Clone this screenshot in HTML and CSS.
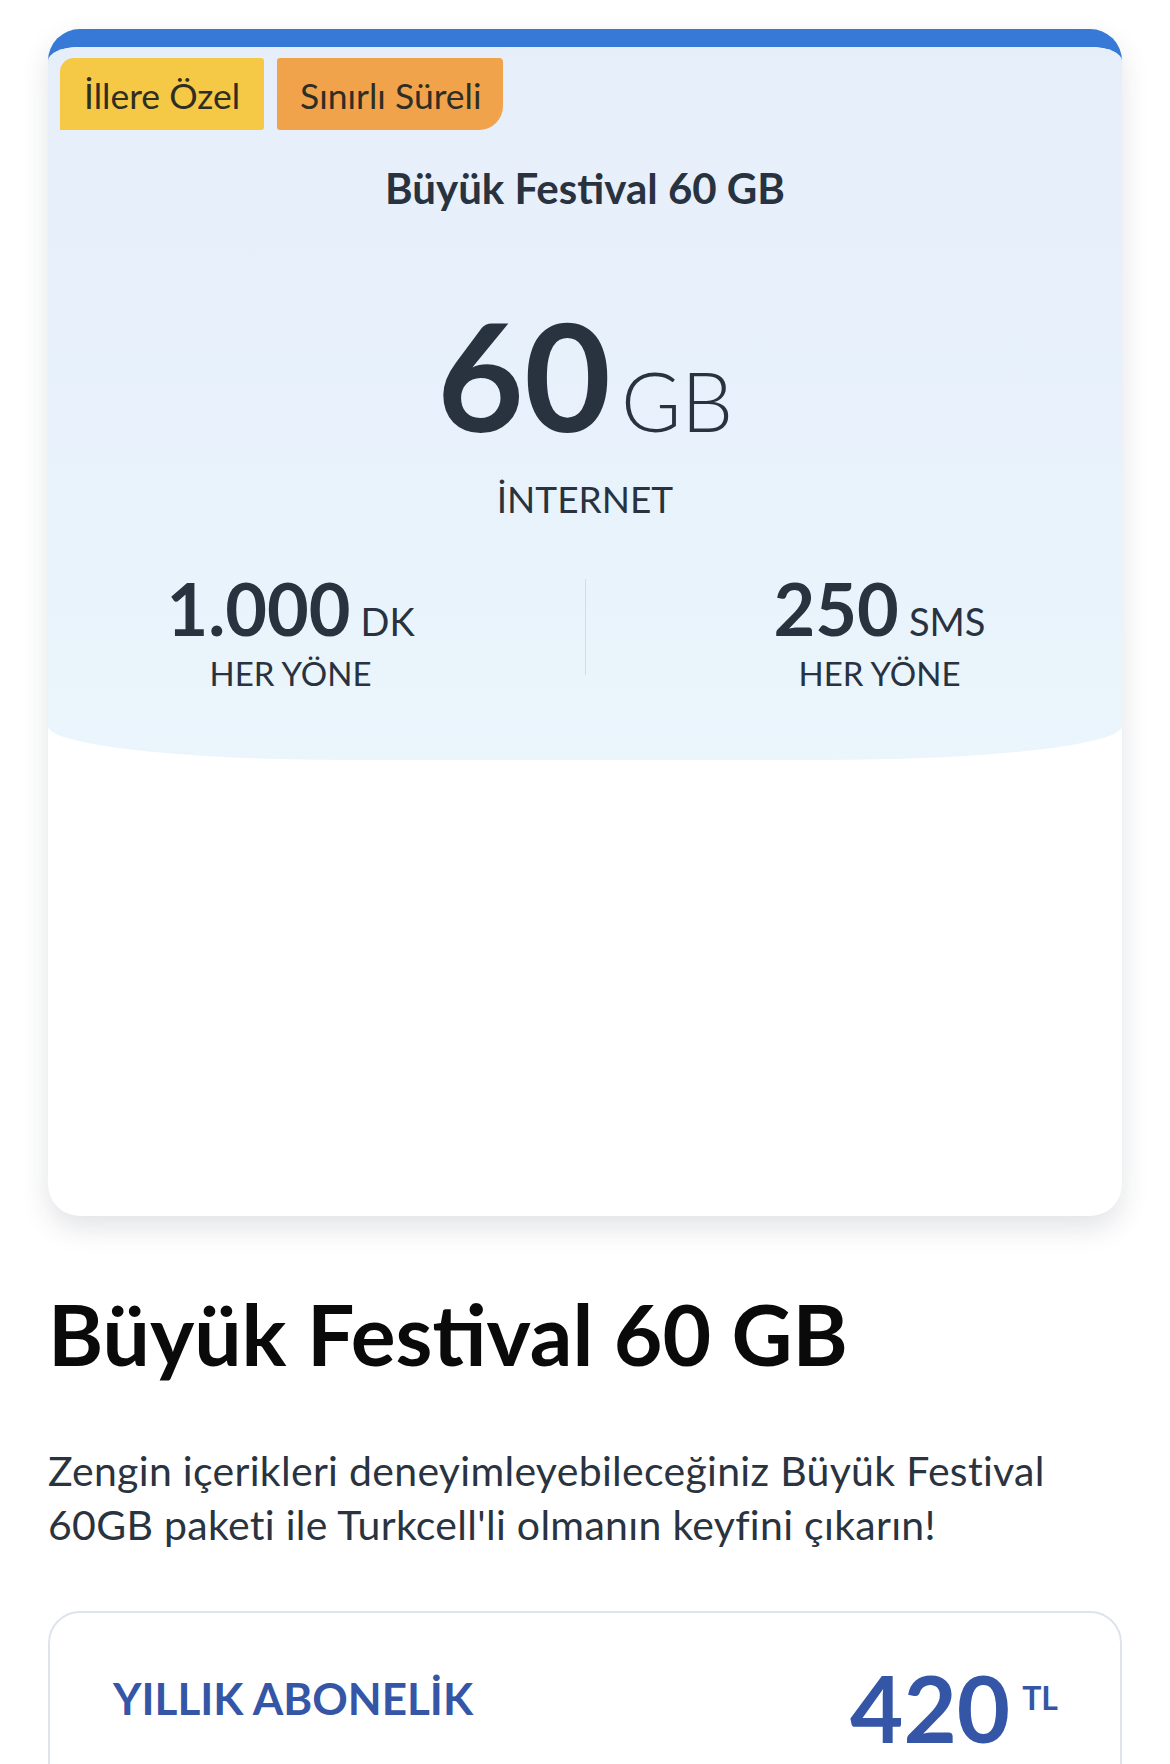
FILE: index.html
```html
<!DOCTYPE html>
<html lang="tr">
<head>
  <meta charset="UTF-8">
  <title>Büyük Festival 60 GB</title>
  <link rel="stylesheet" href="styles.css">
</head>
<body>
  <main class="page">
    <section class="package-card">
      <div class="hero">
        <div class="tags">
          <span class="tag tag-yellow">İllere Özel</span>
          <span class="tag tag-orange">Sınırlı Süreli</span>
        </div>
        <h3 class="card-title">Büyük Festival 60 GB</h3>
        <div class="amount">
          <span class="amount-value">60</span>
          <span class="amount-unit">GB</span>
        </div>
        <div class="amount-label">İNTERNET</div>
        <div class="stats">
          <div class="stat">
            <div class="stat-value"><span class="stat-number">1.000</span><span class="stat-unit">DK</span></div>
            <div class="stat-label">HER YÖNE</div>
          </div>
          <div class="stat-divider"></div>
          <div class="stat">
            <div class="stat-value"><span class="stat-number">250</span><span class="stat-unit">SMS</span></div>
            <div class="stat-label">HER YÖNE</div>
          </div>
        </div>
      </div>
      <div class="card-body"></div>
    </section>

    <h1 class="title">Büyük Festival 60 GB</h1>
    <p class="description">Zengin içerikleri deneyimleyebileceğiniz Büyük Festival 60GB paketi ile Turkcell'li olmanın keyfini çıkarın!</p>

    <div class="price-box">
      <div class="price-label">YILLIK ABONELİK</div>
      <div class="price">
        <span class="price-value">420</span>
        <span class="price-currency">TL</span>
      </div>
    </div>
  </main>
</body>
</html>
```

FILE: styles.css
```css
body {
  margin: 0;
  background: #fff;
  font-family: Lato, "Noto Sans", sans-serif;
  color: #29323f;
}
.page {
  padding: 29px 48px 0;
}
.package-card {
  border-top: 18px solid #3679d6;
  border-radius: 32px;
  background: #fff;
  box-shadow: 0 12px 28px rgba(30, 40, 60, 0.13);
  overflow: hidden;
}
.hero {
  background: linear-gradient(180deg, #e6eefa 0%, #eaf5fc 100%);
  border-bottom-left-radius: 300px 34px;
  border-bottom-right-radius: 300px 34px;
  padding: 11px 12px 67px;
  text-align: center;
}
.tags {
  display: flex;
  gap: 13px;
}
.tag {
  height: 72px;
  box-sizing: border-box;
  padding: 4px 24px 0;
  line-height: 68px;
  font-size: 35.5px;
  color: #2e2e24;
}
.tag-yellow {
  background: #f5c945;
  border-radius: 14px 3px 3px 0;
}
.tag-orange {
  background: #f0a34b;
  border-radius: 3px 4px 24px 3px;
  padding: 4px 21px 0 23px;
}
.card-title {
  margin: 33px 0 0;
  font-size: 42px;
  line-height: 50px;
  font-weight: 700;
}
.amount {
  margin-top: 86px;
  display: flex;
  justify-content: center;
  align-items: baseline;
}
.amount-value {
  font-size: 150px;
  line-height: 150px;
  font-weight: 700;
}
.amount-unit {
  margin-left: 10px;
  font-size: 82px;
  line-height: 1;
  font-weight: 300;
}
.amount-label {
  margin-top: 28px;
  font-size: 37px;
  line-height: 44px;
}
.stats {
  margin-top: 47px;
  display: flex;
  justify-content: center;
}
.stat {
  width: 440px;
}
.stat-value {
  display: flex;
  justify-content: center;
  align-items: baseline;
}
.stat-number {
  font-size: 72px;
  line-height: 80px;
  font-weight: 700;
}
.stat-unit {
  margin-left: 10px;
  font-size: 38px;
  line-height: 1;
}
.stat-label {
  margin-top: 5px;
  font-size: 33px;
  line-height: 40px;
}
.stat-divider {
  width: 1px;
  height: 96px;
  margin: 11px 74px 0;
  background: #d3dce6;
}
.card-body {
  height: 456px;
}
.title {
  margin: 68px 0 0;
  font-size: 84px;
  line-height: 100px;
  font-weight: 700;
  color: #0a0a0a;
}
.description {
  margin: 60px 0 0;
  font-size: 41px;
  line-height: 54px;
  letter-spacing: 0.3px;
  color: #2a3340;
}
.price-box {
  margin-top: 59px;
  border: 2px solid #dfe3eb;
  border-radius: 32px;
  height: 300px;
  padding: 47px 62px 0 63px;
  display: flex;
  justify-content: space-between;
  align-items: flex-start;
  color: #3556a6;
}
.price-label {
  margin-top: 11px;
  font-size: 44px;
  line-height: 54px;
  font-weight: 700;
}
.price {
  display: flex;
  align-items: flex-start;
}
.price-value {
  font-size: 92px;
  line-height: 96px;
  font-weight: 700;
}
.price-currency {
  margin: 22px 0 0 12px;
  font-size: 32px;
  line-height: 32px;
  font-weight: 700;
}
```
